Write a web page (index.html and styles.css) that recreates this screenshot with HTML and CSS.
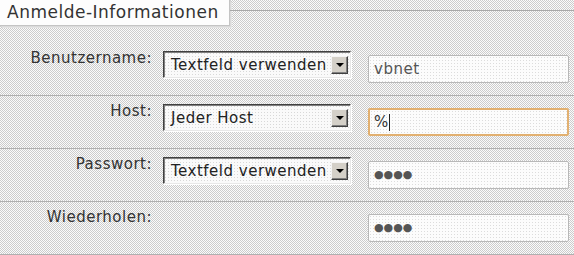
FILE: index.html
```html
<!DOCTYPE html>
<html lang="de">
<head>
    <meta charset="UTF-8">
    <title>Anmelde-Informationen</title>
    <link rel="stylesheet" href="styles.css">
</head>
<body>
    <div class="fieldset">
        <div class="head">
            <div class="legend">Anmelde-Informationen</div>
            <div class="head-line"></div>
        </div>

        <div class="row">
            <div class="label">Benutzername:</div>
            <div class="select">
                <span class="select-text">Textfeld verwenden</span>
                <span class="select-btn"><span class="arrow"></span></span>
            </div>
            <div class="input">vbnet</div>
        </div>

        <div class="row">
            <div class="label">Host:</div>
            <div class="select">
                <span class="select-text">Jeder Host</span>
                <span class="select-btn"><span class="arrow"></span></span>
            </div>
            <div class="input focused">%<span class="caret"></span></div>
        </div>

        <div class="row">
            <div class="label">Passwort:</div>
            <div class="select">
                <span class="select-text">Textfeld verwenden</span>
                <span class="select-btn"><span class="arrow"></span></span>
            </div>
            <div class="input dots">&#9679;&#9679;&#9679;&#9679;</div>
        </div>

        <div class="row">
            <div class="label">Wiederholen:</div>
            <div class="select-spacer"></div>
            <div class="input dots">&#9679;&#9679;&#9679;&#9679;</div>
        </div>
    </div>
</body>
</html>
```

FILE: styles.css
```css
html, body {
    margin: 0;
    padding: 0;
}
body {
    font-family: "DejaVu Sans", Verdana, sans-serif;
    color: #333;
    background-color: #e2e2e2;
    background-image: repeating-conic-gradient(#fbfbfb 0 25%, #cccccc 0 50%);
    background-size: 2px 2px;
    width: 574px;
    height: 255px;
    overflow: hidden;
}
.head {
    display: flex;
    height: 43px;
}
.legend {
    width: 222px;
    height: 25px;
    padding-left: 7px;
    background: #fdfdfd;
    border-right: 1px solid #c4c4c4;
    border-bottom: 1px solid #c4c4c4;
    box-shadow: 1px 1px 0 #dadada, 2px 2px 0 #e4e4e4;
    font-size: 17px;
    letter-spacing: 0.5px;
    line-height: 24px;
    color: #333;
    white-space: nowrap;
}
.head-line {
    flex: 1;
    margin-top: 10px;
    height: 0;
    border-top: 1px solid #a8a8a8;
}
.row {
    display: flex;
    align-items: flex-start;
    height: 52px;
    border-bottom: 1px solid #b0b0b0;
}
.label {
    width: 152px;
    text-align: right;
    font-size: 15px;
    letter-spacing: 0.5px;
    line-height: 17px;
    margin-top: 7px;
}
.select, .select-spacer {
    width: 188px;
    height: 27px;
    margin-left: 11px;
    margin-top: 8px;
    box-sizing: border-box;
}
.select {
    display: flex;
    align-items: center;
    border: 1px solid;
    border-color: #404040 #e8e8e8 #e8e8e8 #404040;
    box-shadow: inset 1px 1px 0 #808080, 1px 1px 0 #fff;
    background-color: #fafafa;
    background-image: radial-gradient(circle, #d8d8d8 0.5px, transparent 0.6px);
    background-size: 3px 3px;
    overflow: hidden;
}
.select-text {
    flex: 1;
    padding-left: 7px;
    font-size: 15px;
    letter-spacing: 0.5px;
    white-space: nowrap;
    overflow: hidden;
    color: #222;
}
.select-btn {
    width: 17px;
    height: 18px;
    margin-right: 2px;
    flex-shrink: 0;
    display: flex;
    align-items: center;
    justify-content: center;
    background: #d4d0c8;
    border: 1px solid;
    border-color: #f4f4f4 #404040 #404040 #f4f4f4;
    box-shadow: inset -1px -1px 0 #808080;
    box-sizing: border-box;
}
.arrow {
    width: 0;
    height: 0;
    border-left: 4px solid transparent;
    border-right: 4px solid transparent;
    border-top: 4px solid #000;
}
.input {
    width: 201px;
    height: 28px;
    margin-left: 17px;
    margin-top: 12px;
    box-sizing: border-box;
    border: 1px solid #b8b8b8;
    border-radius: 2px;
    background-color: #fcfcfc;
    background-image: radial-gradient(circle, #dcdcdc 0.5px, transparent 0.6px);
    background-size: 3px 3px;
    padding-left: 5px;
    font-size: 15px;
    letter-spacing: 0.5px;
    line-height: 26px;
    color: #555;
    display: flex;
    align-items: center;
}
.input.focused {
    border: 2px solid #e2b070;
    padding-left: 4px;
    color: #333;
}
.caret {
    display: inline-block;
    width: 1px;
    height: 17px;
    background: #222;
}
.dots {
    font-size: 11px;
    letter-spacing: 0;
    color: #555;
}
```
